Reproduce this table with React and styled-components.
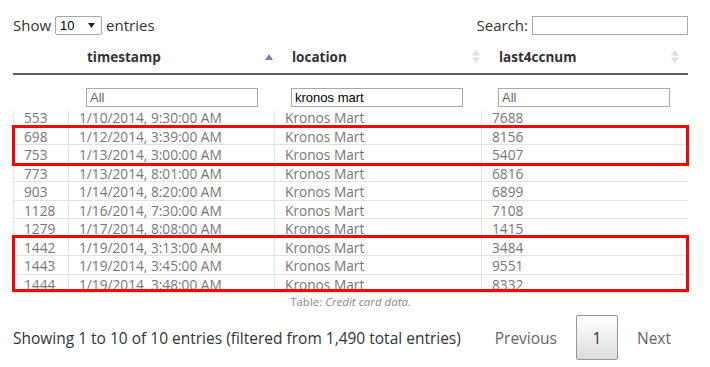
import React, { useLayoutEffect, useRef } from "react";
import styled, { createGlobalStyle } from "styled-components";

const GlobalStyle = createGlobalStyle`
  html, body {
    margin: 0;
    padding: 0;
    background: #ffffff;
  }
  body {
    font-family: "Open Sans", "Noto Sans", sans-serif;
    color: #333333;
  }
`;

const Page = styled.div`
  width: 675px;
  padding: 13px 22px 0 13px;
`;

const TopBar = styled.div`
  display: flex;
  justify-content: space-between;
  align-items: center;
  height: 24px;
  font-size: 15px;
`;

const Label = styled.label`
  display: flex;
  align-items: center;
  gap: 4px;
`;

const SelectBox = styled.div`
  box-sizing: border-box;
  width: 47px;
  height: 19px;
  border: 1px solid #a9a9a9;
  border-radius: 2px;
  display: flex;
  align-items: center;
  justify-content: space-between;
  padding: 0 6px 0 4px;
  font-family: "Liberation Sans", Arial, sans-serif;
  font-size: 13px;
  color: #000;
`;

const TextInput = styled.input`
  box-sizing: border-box;
  width: ${(p) => p.$w || 172}px;
  height: 19px;
  border: 1px solid #a9a9a9;
  padding: 0 3px;
  font-family: "Liberation Sans", Arial, sans-serif;
  font-size: 13px;
  color: #000;
  outline: none;
  &::placeholder {
    color: #666;
  }
`;

const HeadGrid = styled.div`
  display: grid;
  grid-template-columns: 64px 205px 207px 199px;
`;

const HeadCell = styled.div`
  height: 35px;
  padding: 0 9px 0 10px;
  display: flex;
  align-items: center;
  justify-content: space-between;
  font-weight: 700;
  font-size: 13.5px;
  color: #333;
  border-bottom: 2px solid #606060;
  box-sizing: border-box;
  margin-top: 3px;
`;

const FilterCell = styled.div`
  height: 36px;
  padding: 10px 0 0 9px;
  box-sizing: border-box;
`;

const BodyWrap = styled.div`
  position: relative;
`;

const Viewport = styled.div`
  height: 182px;
  overflow: hidden;
`;

const BodyTable = styled.table`
  border-collapse: collapse;
  table-layout: fixed;
  width: 675px;
  font-size: 13.7px;
  color: #777;
`;

const Td = styled.td`
  height: 17.5px;
  padding: 2px 10px 0;
  line-height: 15.5px;
  border-bottom: 1px solid #e2e2e2;
  border-left: 1px solid #e2e2e2;
  white-space: nowrap;
  overflow: hidden;
  box-sizing: border-box;
  &:last-child {
    border-right: 1px solid #e2e2e2;
  }
`;

const Highlight = styled.div`
  position: absolute;
  left: -1px;
  width: 677px;
  box-sizing: border-box;
  border: 3px solid #ff0000;
  pointer-events: none;
`;

const Caption = styled.div`
  text-align: center;
  font-size: 11.5px;
  color: #888;
  margin-top: 1px;
  em {
    font-style: italic;
  }
`;

const Footer = styled.div`
  display: flex;
  justify-content: space-between;
  align-items: center;
  margin-top: 6px;
  font-size: 15.5px;
`;

const Pager = styled.div`
  display: flex;
  align-items: center;
  gap: 19px;
  margin-right: 17px;
`;

const PageLink = styled.span`
  color: #666;
`;

const PageButton = styled.span`
  width: 42px;
  height: 45px;
  box-sizing: border-box;
  display: flex;
  align-items: center;
  justify-content: center;
  border: 1px solid #979797;
  border-radius: 2px;
  background: linear-gradient(to bottom, #ffffff 0%, #dcdcdc 100%);
  color: #333;
`;

const SortUp = () => (
  <svg width="8" height="6" viewBox="0 0 8 6">
    <path d="M0 6 L4 0 L8 6 Z" fill="#7b7bd1" />
  </svg>
);

const SortBoth = () => (
  <svg width="8" height="13" viewBox="0 0 8 13">
    <path d="M0 5.5 L4 0 L8 5.5 Z" fill="#e0e0e0" />
    <path d="M0 7.5 L4 13 L8 7.5 Z" fill="#e0e0e0" />
  </svg>
);

const rows = [
  ["553", "1/10/2014, 9:30:00 AM", "Kronos Mart", "7688"],
  ["698", "1/12/2014, 3:39:00 AM", "Kronos Mart", "8156"],
  ["753", "1/13/2014, 3:00:00 AM", "Kronos Mart", "5407"],
  ["773", "1/13/2014, 8:01:00 AM", "Kronos Mart", "6816"],
  ["903", "1/14/2014, 8:20:00 AM", "Kronos Mart", "6899"],
  ["1128", "1/16/2014, 7:30:00 AM", "Kronos Mart", "7108"],
  ["1279", "1/17/2014, 8:08:00 AM", "Kronos Mart", "1415"],
  ["1442", "1/19/2014, 3:13:00 AM", "Kronos Mart", "3484"],
  ["1443", "1/19/2014, 3:45:00 AM", "Kronos Mart", "9551"],
  ["1444", "1/19/2014, 3:48:00 AM", "Kronos Mart", "8332"],
];

export default function App() {
  const viewRef = useRef(null);

  // body is scrolled a few pixels, as in the screenshot
  useLayoutEffect(() => {
    if (viewRef.current) viewRef.current.scrollTop = 3;
  }, []);

  return (
    <Page>
      <GlobalStyle />
      <TopBar>
        <Label>
          Show
          <SelectBox>
            10
            <svg width="7" height="5" viewBox="0 0 7 5">
              <path d="M0 0 L7 0 L3.5 5 Z" fill="#222" />
            </svg>
          </SelectBox>
          entries
        </Label>
        <Label>
          Search:
          <TextInput $w={156} />
        </Label>
      </TopBar>

      <HeadGrid>
        <HeadCell />
        <HeadCell>
          timestamp <SortUp />
        </HeadCell>
        <HeadCell>
          location <SortBoth />
        </HeadCell>
        <HeadCell>
          last4ccnum <SortBoth />
        </HeadCell>
        <FilterCell />
        <FilterCell>
          <TextInput placeholder="All" />
        </FilterCell>
        <FilterCell>
          <TextInput defaultValue="kronos mart" />
        </FilterCell>
        <FilterCell>
          <TextInput placeholder="All" />
        </FilterCell>
      </HeadGrid>

      <BodyWrap>
        <Viewport ref={viewRef}>
          <BodyTable>
            <colgroup>
              <col style={{ width: 55 }} />
              <col style={{ width: 206 }} />
              <col style={{ width: 207 }} />
              <col style={{ width: 207 }} />
            </colgroup>
            <tbody>
              {rows.map((r) => (
                <tr key={r[0]}>
                  {r.map((c, i) => (
                    <Td key={i}>{c}</Td>
                  ))}
                </tr>
              ))}
            </tbody>
          </BodyTable>
        </Viewport>
        <Highlight style={{ top: 14, height: 41 }} />
        <Highlight style={{ top: 124, height: 57 }} />
      </BodyWrap>

      <Caption>
        Table: <em>Credit card data.</em>
      </Caption>

      <Footer>
        <span>Showing 1 to 10 of 10 entries (filtered from 1,490 total entries)</span>
        <Pager>
          <PageLink>Previous</PageLink>
          <PageButton>1</PageButton>
          <PageLink>Next</PageLink>
        </Pager>
      </Footer>
    </Page>
  );
}
